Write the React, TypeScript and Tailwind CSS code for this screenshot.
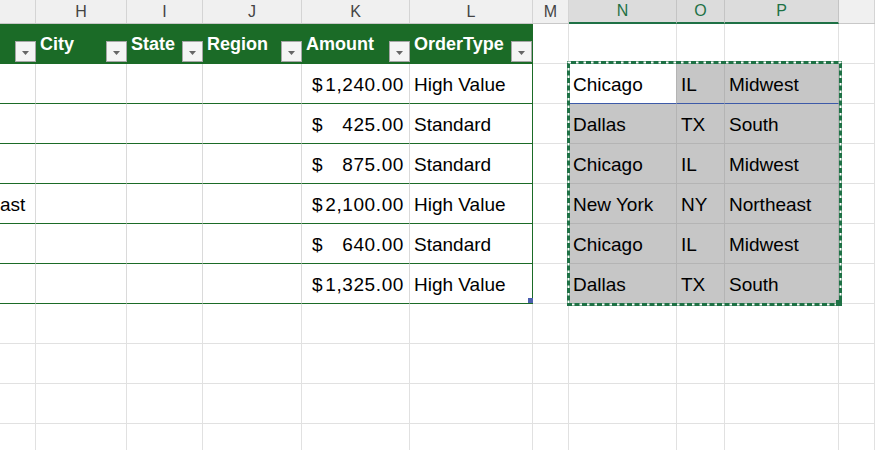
import React from "react";

type Col = { w: string; letter: string };
const cols: Col[] = [
  { w: "w-[36px]", letter: "" },
  { w: "w-[91px]", letter: "H" },
  { w: "w-[76px]", letter: "I" },
  { w: "w-[99px]", letter: "J" },
  { w: "w-[108px]", letter: "K" },
  { w: "w-[123px]", letter: "L" },
  { w: "w-[36px]", letter: "M" },
  { w: "w-[108px]", letter: "N" },
  { w: "w-[48px]", letter: "O" },
  { w: "w-[114px]", letter: "P" },
  { w: "flex-1", letter: "" },
];

const headers = ["", "City", "State", "Region", "Amount", "OrderType"];

const data = [
  { amt: "1,240.00", type: "High Value", n: "Chicago", o: "IL", p: "Midwest", left: "" },
  { amt: "425.00", type: "Standard", n: "Dallas", o: "TX", p: "South", left: "" },
  { amt: "875.00", type: "Standard", n: "Chicago", o: "IL", p: "Midwest", left: "" },
  { amt: "2,100.00", type: "High Value", n: "New York", o: "NY", p: "Northeast", left: "Northeast" },
  { amt: "640.00", type: "Standard", n: "Chicago", o: "IL", p: "Midwest", left: "" },
  { amt: "1,325.00", type: "High Value", n: "Dallas", o: "TX", p: "South", left: "" },
];

function FilterBtn() {
  return (
    <div className="w-[21px] h-[21px] mb-[1px] shrink-0 bg-[#f4f4f4] border border-[#a6a6a6] flex items-center justify-center">
      <svg width="9" height="6" viewBox="0 0 9 6" className="mt-[2px]">
        <polygon points="1,1 8,1 4.5,5" fill="#666" />
      </svg>
    </div>
  );
}

export default function App() {
  const font = { fontFamily: '"Liberation Sans", Arial, sans-serif' };
  return (
    <div className="relative w-[875px] h-[450px] overflow-hidden bg-white text-black" style={font}>
      {/* Column letters */}
      <div className="flex h-[24px] bg-[#f0f0f0] border-b border-[#c8c8c8]">
        {cols.map((c, i) => {
          const sel = i >= 7 && i <= 9;
          return (
            <div
              key={i}
              className={`${c.w} shrink-0 flex items-center justify-center text-[16px] border-r ${
                sel
                  ? "bg-[#dcdcdc] text-[#1e7145] border-[#c4c4c4] border-b-2 border-b-[#1e7145] h-[24px] -mb-[1px]"
                  : "text-[#444] border-[#d4d4d4]"
              }`}
            >
              {c.letter}
            </div>
          );
        })}
      </div>

      {/* Table header row */}
      <div className="flex h-[40px]">
        {cols.map((c, i) => {
          if (i <= 5) {
            return (
              <div
                key={i}
                className={`${c.w} shrink-0 bg-[#1b6b27] border-b border-[#1b6b27] flex items-end justify-between pl-[4px] ${
                  i === 5 ? "border-r border-r-[#1b6b27]" : ""
                }`}
              >
                <span className="text-white font-bold text-[18px] leading-[24px] mb-[7px] whitespace-nowrap">
                  {headers[i]}
                </span>
                <FilterBtn />
              </div>
            );
          }
          return (
            <div key={i} className={`${c.w} shrink-0 border-r border-b border-[#e1e1e1]`} />
          );
        })}
      </div>

      {/* Data rows */}
      {data.map((r, ri) => (
        <div key={ri} className="flex h-[40px] text-[19px]">
          {cols.map((c, i) => {
            const base = `${c.w} shrink-0 h-[40px] pt-[3px] flex items-center overflow-hidden whitespace-nowrap`;
            if (i <= 5) {
              const rb = i === 5 ? "border-r border-r-[#1b6b27]" : "border-r border-r-[#dadada]";
              let content: React.ReactNode = null;
              if (i === 0 && r.left) content = <span className="ml-[-57px]">{r.left}</span>;
              if (i === 4)
                content = (
                  <div className="flex w-full justify-between pl-[10px] pr-[5px]">
                    <span>$</span>
                    <span className="tracking-[0.6px]">{r.amt}</span>
                  </div>
                );
              if (i === 5) content = <span className="pl-[4px]">{r.type}</span>;
              return (
                <div key={i} className={`${base} border-b border-b-[#1b6b27] ${rb}`}>
                  {content}
                </div>
              );
            }
            if (i >= 7 && i <= 9) {
              const active = ri === 0 && i === 7;
              const txt = i === 7 ? r.n : i === 8 ? r.o : r.p;
              return (
                <div
                  key={i}
                  className={`${base} border-r border-b ${active ? "bg-white" : "bg-[#c6c6c6]"} border-[#b4b4b4] ${
                    ri === 0 ? "border-b-[#3d5aa8]" : ""
                  }`}
                >
                  <span className="pl-[4px]">{txt}</span>
                </div>
              );
            }
            return <div key={i} className={`${base} border-r border-b border-[#e1e1e1]`} />;
          })}
        </div>
      ))}

      {/* Empty rows */}
      {[0, 1, 2, 3].map((ri) => (
        <div key={ri} className="flex h-[40px]">
          {cols.map((c, i) => (
            <div key={i} className={`${c.w} shrink-0 border-r border-b border-[#e1e1e1]`} />
          ))}
        </div>
      ))}

      {/* Table resize handle */}
      <div className="absolute left-[528px] top-[298px] w-[5px] h-[5px] bg-[#4b5fae]" />

      {/* Selection marching ants */}
      <svg className="absolute left-[567px] top-[61px]" width="276" height="246">
        <rect x="1.5" y="1.5" width="272" height="242" fill="none" stroke="#1e7145" strokeWidth="3" />
        <rect x="1.5" y="1.5" width="272" height="242" fill="none" stroke="#ffffff" strokeWidth="2" strokeDasharray="2.5 5" />
        <rect x="269" y="239" width="6" height="6" fill="#1e7145" />
      </svg>
    </div>
  );
}
